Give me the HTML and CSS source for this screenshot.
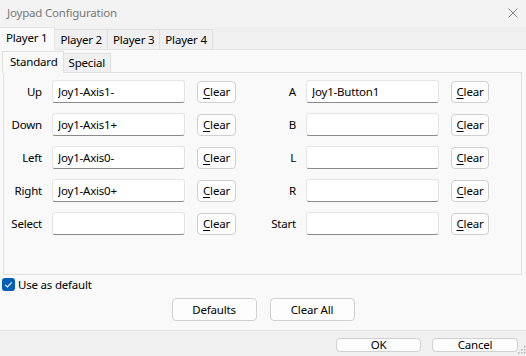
FILE: index.html
```html
<!DOCTYPE html>
<html lang="en">
<head>
<meta charset="utf-8">
<title>Joypad Configuration</title>
<link rel="stylesheet" href="styles.css">
</head>
<body>
<div class="window">
  <div class="titlebar">
    <span class="title">Joypad Configuration</span>
    <svg class="close" width="10" height="10" viewBox="0 0 10 10"><path d="M0.5 0.5 L9.5 9.5 M9.5 0.5 L0.5 9.5" stroke="#8a8a8a" stroke-width="1" fill="none"/></svg>
  </div>
  <div class="tabs">
    <div class="tab sel">Player 1</div>
    <div class="tab">Player 2</div>
    <div class="tab">Player 3</div>
    <div class="tab">Player 4</div>
  </div>
  <div class="page">
    <div class="subtabs">
      <div class="subtab sel">Standard</div>
      <div class="subtab">Special</div>
    </div>
    <div class="panel">
      <div class="grid">
        <span class="lbl">Up</span><input class="field" type="text" value="Joy1-Axis1-" readonly><button class="btn clear"><u>C</u>lear</button>
        <span class="lbl">A</span><input class="field" type="text" value="Joy1-Button1" readonly><button class="btn clear"><u>C</u>lear</button>

        <span class="lbl">Down</span><input class="field" type="text" value="Joy1-Axis1+" readonly><button class="btn clear"><u>C</u>lear</button>
        <span class="lbl">B</span><input class="field" type="text" value="" readonly><button class="btn clear"><u>C</u>lear</button>

        <span class="lbl">Left</span><input class="field" type="text" value="Joy1-Axis0-" readonly><button class="btn clear"><u>C</u>lear</button>
        <span class="lbl">L</span><input class="field" type="text" value="" readonly><button class="btn clear"><u>C</u>lear</button>

        <span class="lbl">Right</span><input class="field" type="text" value="Joy1-Axis0+" readonly><button class="btn clear"><u>C</u>lear</button>
        <span class="lbl">R</span><input class="field" type="text" value="" readonly><button class="btn clear"><u>C</u>lear</button>

        <span class="lbl">Select</span><input class="field" type="text" value="" readonly><button class="btn clear"><u>C</u>lear</button>
        <span class="lbl">Start</span><input class="field" type="text" value="" readonly><button class="btn clear"><u>C</u>lear</button>
      </div>
    </div>
    <div class="check">
      <span class="box"><svg width="13" height="13" viewBox="0 0 13 13"><path d="M3.2 6.8 L5.4 9 L9.8 4.4" stroke="#ffffff" stroke-width="1.1" fill="none"/></svg></span>
      <span>Use as default</span>
    </div>
    <div class="actions">
      <button class="btn wide">Defaults</button>
      <button class="btn wide">Clear All</button>
    </div>
  </div>
  <div class="footer">
    <button class="btn foot">OK</button>
    <button class="btn foot">Cancel</button>
    <svg class="grip" width="8" height="10" viewBox="0 0 8 10">
      <rect x="6" y="0" width="1.5" height="1.5" fill="#b0b0b0"/>
      <rect x="3" y="3" width="1.5" height="1.5" fill="#b0b0b0"/>
      <rect x="6" y="3" width="1.5" height="1.5" fill="#b0b0b0"/>
      <rect x="0" y="6" width="1.5" height="1.5" fill="#b0b0b0"/>
      <rect x="3" y="6" width="1.5" height="1.5" fill="#b0b0b0"/>
      <rect x="6" y="6" width="1.5" height="1.5" fill="#b0b0b0"/>
    </svg>
  </div>
</div>
</body>
</html>
```
FILE: styles.css
```css
* { box-sizing: border-box; }
html, body {
  margin: 0;
  padding: 0;
  background: #f0f0f0;
}
body {
  font-family: "Noto Sans", "Open Sans", sans-serif;
  font-size: 11.5px;
  letter-spacing: -0.2px;
  color: #000;
}
.window {
  width: 526px;
  height: 356px;
  display: flex;
  flex-direction: column;
  overflow: hidden;
  position: relative;
}
.titlebar {
  height: 27px;
  background: #f3f3f3;
  display: flex;
  align-items: center;
  justify-content: space-between;
  padding: 0 8px 2px 7px;
}
.title {
  color: #777;
}
.close { display: block; margin-top: 1px; }

.tabs {
  height: 22px;
  display: flex;
  align-items: flex-end;
  background: #f0f0f0;
}
.tab {
  height: 20px;
  line-height: 19px;
  padding: 0 5px;
  border: 1px solid #e0e0e0;
  border-bottom: none;
  margin-left: -1px;
  background: #f0f0f0;
  white-space: nowrap;
}
.tab.sel {
  height: 23px;
  line-height: 20px;
  margin-left: 0;
  margin-bottom: -1px;
  padding: 0 7px 0 6px;
  background: #f9f9f9;
  border-color: #e5e5e5;
  border-left: none;
  position: relative;
  z-index: 1;
}
.page {
  height: 281px;
  background: #f9f9f9;
  border-top: 1px solid #e5e5e5;
  display: flex;
  flex-direction: column;
}
.subtabs {
  height: 22px;
  display: flex;
  align-items: flex-end;
  padding-left: 2px;
}
.subtab {
  height: 19px;
  line-height: 18px;
  padding: 0 5px;
  border: 1px solid #e0e0e0;
  border-bottom: none;
  background: #f0f0f0;
  margin-left: -1px;
}
.subtab.sel {
  height: 22px;
  line-height: 19px;
  margin-left: 0;
  margin-bottom: -1px;
  padding: 0 5px 0 7px;
  background: #f9f9f9;
  position: relative;
  z-index: 1;
}
.panel {
  margin: 0 4px 0 3px;
  height: 203px;
  border: 1px solid #e0e0e0;
  padding-top: 7px;
}
.grid {
  display: grid;
  grid-template-columns: 38px 133px 41px 50px 133px 41px;
  column-gap: 10px;
  row-gap: 10px;
  grid-auto-rows: 23px;
  align-items: center;
}
.lbl {
  text-align: right;
  white-space: nowrap;
  line-height: 16px;
}
.field {
  width: 133px;
  height: 23px;
  margin: 0;
  padding: 0 5px;
  border: 1px solid #e5e5e5;
  border-bottom-color: #8a8a8a;
  border-radius: 3px;
  background: #fff;
  font-family: inherit;
  font-size: inherit;
  letter-spacing: inherit;
  color: #000;
  outline: none;
}
.btn {
  margin: 0;
  padding: 0;
  font-family: inherit;
  font-size: inherit;
  letter-spacing: inherit;
  color: #000;
  background: #fdfdfd;
  border: 1px solid #d0d0d0;
  border-radius: 4px;
}
.btn.clear {
  width: 39px;
  height: 22px;
  justify-self: end;
  line-height: 18px;
}
.btn.clear u { text-underline-offset: 2px; }
.grid > .btn.clear:nth-child(6n) { width: 38px; margin-right: 1px; }

.check {
  margin-top: 3px;
  padding-left: 2px;
  height: 13px;
  display: flex;
  align-items: center;
  gap: 3px;
  line-height: 13px;
}
.box {
  width: 13px;
  height: 13px;
  border-radius: 3px;
  background: #005fb8;
  display: block;
}
.box svg { display: block; }
.actions {
  margin-top: 7px;
  display: flex;
  justify-content: center;
  gap: 13px;
}
.btn.wide {
  width: 85px;
  height: 23px;
}
.footer {
  height: 26px;
  background: #f0f0f0;
  border-top: 1px solid #e3e3e3;
  display: flex;
  justify-content: flex-end;
  align-items: flex-start;
  gap: 11px;
  padding: 7px 8px 0 0;
}
.btn.foot {
  height: 14px;
  line-height: 12px;
  border-radius: 4px;
}
.btn.foot:first-child { width: 85px; }
.btn.foot:nth-child(2) { width: 86px; }
.grip {
  position: absolute;
  right: 0;
  bottom: 0;
}
```
